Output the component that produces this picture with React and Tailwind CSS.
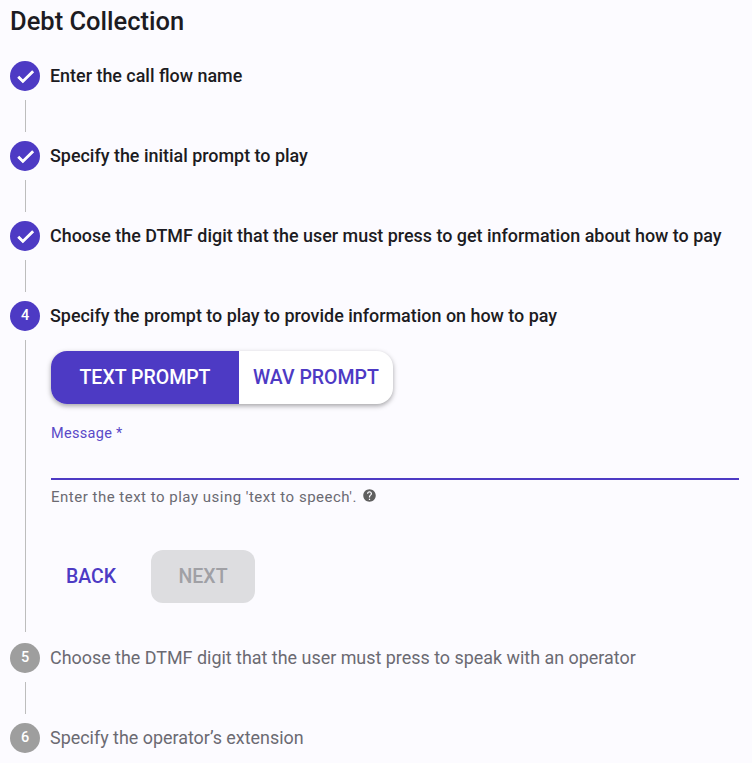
const CheckIcon = () => (
  <svg viewBox="0 0 24 24" className="w-[21px] h-[21px]" fill="#fff" stroke="#fff" strokeWidth="1.2">
    <path d="M9 16.17 4.83 12l-1.42 1.41L9 19 21 7l-1.41-1.41z" />
  </svg>
);

const HelpIcon = () => (
  <svg viewBox="0 0 24 24" className="w-[15px] h-[15px] ml-[5px] mb-[3px]" fill="#5f5f5f">
    <path d="M12 2C6.48 2 2 6.48 2 12s4.48 10 10 10 10-4.48 10-10S17.52 2 12 2zm1 17h-2v-2h2v2zm2.07-7.75-.9.92C13.45 12.9 13 13.5 13 15h-2v-.5c0-1.1.45-2.1 1.17-2.83l1.24-1.26c.37-.36.59-.86.59-1.41 0-1.1-.9-2-2-2s-2 .9-2 2H8c0-2.21 1.79-4 4-4s4 1.79 4 4c0 .88-.36 1.68-.93 2.25z" />
  </svg>
);

const Step = ({ mark, label, active = true }) => (
  <div className="flex items-center h-[30px]">
    <div
      className={`w-[30px] h-[30px] rounded-full flex items-center justify-center text-[14.5px] font-medium text-white ${
        active ? "bg-[#4d3ac4]" : "bg-[#9e9e9e]"
      }`}
    >
      {mark}
    </div>
    <span className={`ml-[10px] text-[17.92px] leading-[28px] whitespace-nowrap ${active ? "font-medium text-[#1c1b22]" : "font-normal text-[#6b6a72]"}`}>
      {label}
    </span>
  </div>
);

const Connector = () => (
  <div className="ml-[15px] py-[9px]">
    <div className="h-[32px] border-l border-[#bdbdbd]" />
  </div>
);

export default function App() {
  return (
    <div className="w-[752px] h-[763px] overflow-hidden bg-[#fcfbff] px-[10px] font-['Roboto',sans-serif]">
      <h1 className="h-[61px] pt-[5px] text-[25.5px] leading-[32px] font-medium text-[#1c1b22]">Debt Collection</h1>

      <Step mark={<CheckIcon />} label="Enter the call flow name" />
      <Connector />
      <Step mark={<CheckIcon />} label="Specify the initial prompt to play" />
      <Connector />
      <Step mark={<CheckIcon />} label="Choose the DTMF digit that the user must press to get information about how to pay" />
      <Connector />
      <Step mark="4" label="Specify the prompt to play to provide information on how to pay" />

      <div className="ml-[15px] mt-[9px] mb-[11px] h-[292px] border-l border-[#bdbdbd] pl-[25px] pr-[3px] pt-[11px]">
        <div className="flex w-[342px] h-[53px] rounded-[16px] bg-white shadow-[0_2px_5px_rgba(0,0,0,0.35)] text-[19.5px] font-medium">
          <div className="w-[188px] rounded-l-[16px] bg-[#4d3ac4] text-white flex items-center justify-center">TEXT PROMPT</div>
          <div className="flex-1 rounded-r-[16px] text-[#4d3ac4] flex items-center justify-center">WAV PROMPT</div>
        </div>

        <div className="mt-[21px] text-[14.5px] leading-[17px] tracking-[0.3px] text-[#5a49c8]">Message *</div>
        <div className="mt-[36px] h-[2px] bg-[#4d3ac4]" />
        <div className="mt-[8px] flex items-center text-[15px] leading-[18px] tracking-[0.5px] text-[#6b6a72]">
          Enter the text to play using 'text to speech'.
          <HelpIcon />
        </div>

        <div className="mt-[44px] flex items-center text-[19.5px] font-medium">
          <div className="w-[80px] h-[53px] flex items-center justify-center text-[#4d3ac4]">BACK</div>
          <div className="ml-[20px] w-[104px] h-[53px] rounded-[12px] bg-[#dddde0] text-[#a0a0a5] flex items-center justify-center">NEXT</div>
        </div>
      </div>

      <Step mark="5" label="Choose the DTMF digit that the user must press to speak with an operator" active={false} />
      <Connector />
      <Step mark="6" label="Specify the operator’s extension" active={false} />
    </div>
  );
}
